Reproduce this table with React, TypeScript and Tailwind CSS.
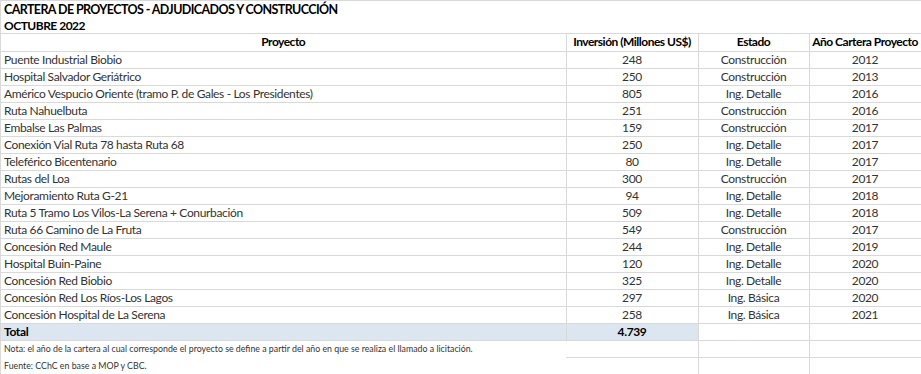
const rows: [string, string, string, string][] = [
  ['Puente Industrial Biobio', '248', 'Construcción', '2012'],
  ['Hospital Salvador Geriátrico', '250', 'Construcción', '2013'],
  ['Américo Vespucio Oriente (tramo P. de Gales - Los Presidentes)', '805', 'Ing. Detalle', '2016'],
  ['Ruta Nahuelbuta', '251', 'Construcción', '2016'],
  ['Embalse Las Palmas', '159', 'Construcción', '2017'],
  ['Conexión Vial Ruta 78 hasta Ruta 68', '250', 'Ing. Detalle', '2017'],
  ['Teleférico Bicentenario', '80', 'Ing. Detalle', '2017'],
  ['Rutas del Loa', '300', 'Construcción', '2017'],
  ['Mejoramiento Ruta G-21', '94', 'Ing. Detalle', '2018'],
  ['Ruta 5 Tramo Los Vilos-La Serena + Conurbación', '509', 'Ing. Detalle', '2018'],
  ['Ruta 66 Camino de La Fruta', '549', 'Construcción', '2017'],
  ['Concesión Red Maule', '244', 'Ing. Detalle', '2019'],
  ['Hospital Buin-Paine', '120', 'Ing. Detalle', '2020'],
  ['Concesión Red Biobio', '325', 'Ing. Detalle', '2020'],
  ['Concesión Red Los Ríos-Los Lagos', '297', 'Ing. Básica', '2020'],
  ['Concesión Hospital de La Serena', '258', 'Ing. Básica', '2021'],
];

const cell = 'h-[17px] p-0 border-b border-r border-[#d9d9d9] leading-[16px] whitespace-nowrap';

export default function App() {
  return (
    <div className="w-[921px] h-[374px] overflow-hidden bg-white text-[#333] text-[12px] tracking-[-0.35px] font-['Lato','Liberation_Sans',sans-serif]">
      <div className="border-t border-l border-[#d9d9d9]">
        {/* título */}
        <div className="h-[17px] pl-[3px] leading-[17px] font-bold text-black text-[12.5px] tracking-[-0.6px]">
          CARTERA DE PROYECTOS - ADJUDICADOS Y CONSTRUCCIÓN
        </div>
        <div className="h-[16px] pl-[3px] leading-[16px] font-bold text-black tracking-[-0.5px] border-b border-[#d9d9d9]">
          OCTUBRE 2022
        </div>

        <table className="table-fixed border-collapse w-[920px]">
          <colgroup>
            <col className="w-[565px]" />
            <col className="w-[132px]" />
            <col className="w-[111px]" />
            <col className="w-[112px]" />
          </colgroup>
          <thead>
            <tr className="font-bold text-black tracking-[-0.5px]">
              <th className={`${cell} text-center`}>Proyecto</th>
              <th className={`${cell} text-center`}>Inversión (Millones US$)</th>
              <th className={`${cell} text-center`}>Estado</th>
              <th className={`${cell} text-center`}>Año Cartera Proyecto</th>
            </tr>
          </thead>
          <tbody>
            {rows.map(([name, inv, estado, year]) => (
              <tr key={name}>
                <td className={`${cell} pl-[3px] text-left`}>{name}</td>
                <td className={`${cell} text-center`}>{inv}</td>
                <td className={`${cell} text-center`}>{estado}</td>
                <td className={`${cell} text-center`}>{year}</td>
              </tr>
            ))}
            <tr className="font-bold text-black">
              <td className={`${cell} pl-[3px] bg-[#dce6f1]`}>Total</td>
              <td className={`${cell} text-center bg-[#dce6f1]`}>4.739</td>
              <td className={cell} />
              <td className={cell} />
            </tr>
            <tr>
              <td className="h-[17px] p-0 pl-[3px] text-[8.8px] tracking-normal leading-[16px] whitespace-nowrap">
                Nota: el año de la cartera al cual corresponde el proyecto se define a partir del año en que se realiza el llamado a licitación.
              </td>
              <td className={cell} />
              <td className={cell} />
              <td className={cell} />
            </tr>
            <tr>
              <td className="h-[17px] p-0 pl-[3px] text-[8.8px] tracking-normal leading-[16px] whitespace-nowrap">
                Fuente: CChC en base a MOP y CBC.
              </td>
              <td className={cell} />
              <td className={cell} />
              <td className={cell} />
            </tr>
          </tbody>
        </table>
      </div>
    </div>
  );
}
